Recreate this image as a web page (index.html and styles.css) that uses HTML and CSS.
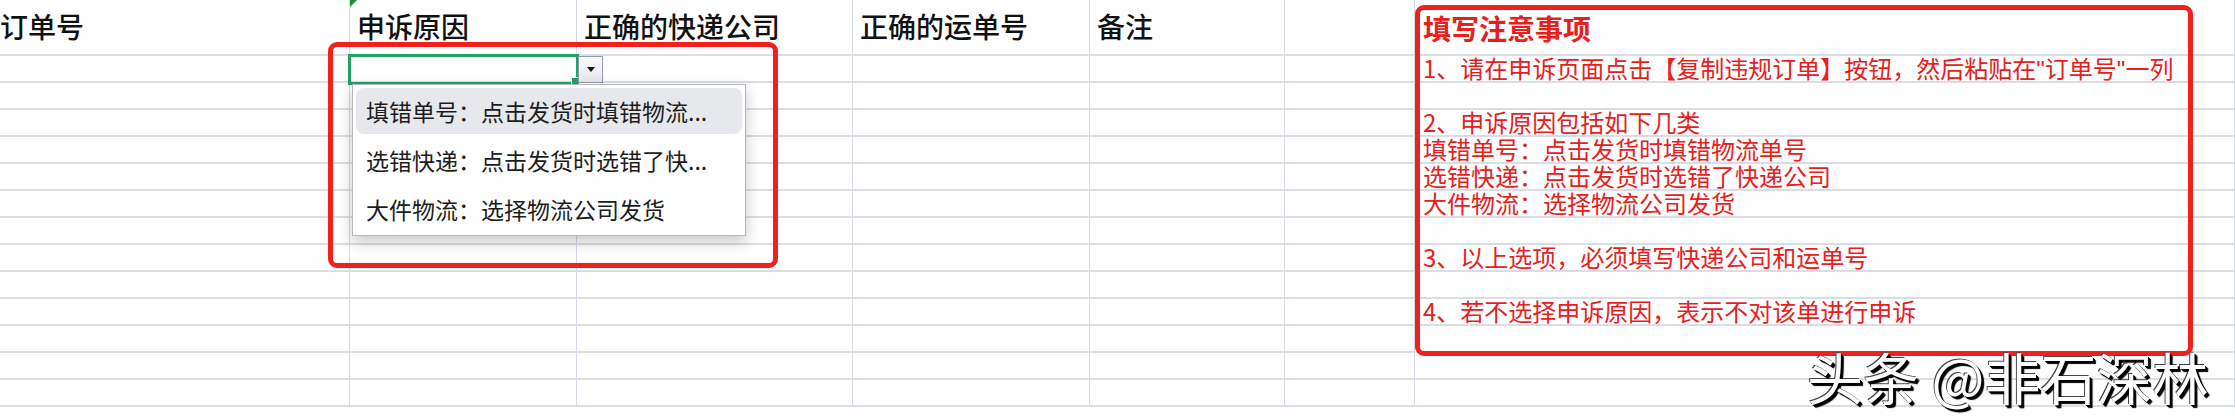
FILE: index.html
```html
<!DOCTYPE html>
<html lang="zh-CN">
<head>
    <meta charset="UTF-8">
    <meta name="viewport" content="width=device-width, initial-scale=1.0">
    <title>申诉模板</title>
    <link rel="stylesheet" href="styles.css">
</head>
<body>
    <div class="page">
        <div class="sheet">
            <div class="row head-row">
                <div class="cell">订单号</div>
                <div class="cell cell-flag">申诉原因</div>
                <div class="cell">正确的快递公司</div>
                <div class="cell">正确的运单号</div>
                <div class="cell">备注</div>
                <div class="cell"></div>
                <div class="cell"></div>
            </div>
            <div class="row">
                <div class="cell"></div>
                <div class="cell cell-active">
                    <span class="fill-handle"></span>
                    <span class="drop-btn"><span class="drop-arrow"></span></span>
                    <ul class="drop-menu">
                        <li class="drop-item hover">填错单号：点击发货时填错物流...</li>
                        <li class="drop-item">选错快递：点击发货时选错了快...</li>
                        <li class="drop-item">大件物流：选择物流公司发货</li>
                    </ul>
                </div>
                <div class="cell"></div><div class="cell"></div><div class="cell"></div><div class="cell"></div><div class="cell"></div>
            </div>
            <div class="row"><div class="cell"></div><div class="cell"></div><div class="cell"></div><div class="cell"></div><div class="cell"></div><div class="cell"></div><div class="cell"></div></div>
            <div class="row"><div class="cell"></div><div class="cell"></div><div class="cell"></div><div class="cell"></div><div class="cell"></div><div class="cell"></div><div class="cell"></div></div>
            <div class="row"><div class="cell"></div><div class="cell"></div><div class="cell"></div><div class="cell"></div><div class="cell"></div><div class="cell"></div><div class="cell"></div></div>
            <div class="row"><div class="cell"></div><div class="cell"></div><div class="cell"></div><div class="cell"></div><div class="cell"></div><div class="cell"></div><div class="cell"></div></div>
            <div class="row"><div class="cell"></div><div class="cell"></div><div class="cell"></div><div class="cell"></div><div class="cell"></div><div class="cell"></div><div class="cell"></div></div>
            <div class="row"><div class="cell"></div><div class="cell"></div><div class="cell"></div><div class="cell"></div><div class="cell"></div><div class="cell"></div><div class="cell"></div></div>
            <div class="row"><div class="cell"></div><div class="cell"></div><div class="cell"></div><div class="cell"></div><div class="cell"></div><div class="cell"></div><div class="cell"></div></div>
            <div class="row"><div class="cell"></div><div class="cell"></div><div class="cell"></div><div class="cell"></div><div class="cell"></div><div class="cell"></div><div class="cell"></div></div>
            <div class="row"><div class="cell"></div><div class="cell"></div><div class="cell"></div><div class="cell"></div><div class="cell"></div><div class="cell"></div><div class="cell"></div></div>
            <div class="row"><div class="cell"></div><div class="cell"></div><div class="cell"></div><div class="cell"></div><div class="cell"></div><div class="cell"></div><div class="cell"></div></div>
            <div class="row"><div class="cell"></div><div class="cell"></div><div class="cell"></div><div class="cell"></div><div class="cell"></div><div class="cell"></div><div class="cell"></div></div>
            <div class="row"><div class="cell"></div><div class="cell"></div><div class="cell"></div><div class="cell"></div><div class="cell"></div><div class="cell"></div><div class="cell"></div></div>
        </div>

        <!-- annotation marks drawn over the sheet -->
        <div class="mark mark-drop"></div>

        <div class="mark notes">
            <h2 class="notes-title">填写注意事项</h2>
            <p class="note-line">1、请在申诉页面点击【复制违规订单】按钮，然后粘贴在<span class="narrow">"</span>订单号<span class="narrow">"</span>一列</p>
            <p class="note-line"></p>
            <p class="note-line">2、申诉原因包括如下几类</p>
            <p class="note-line">填错单号：点击发货时填错物流单号</p>
            <p class="note-line">选错快递：点击发货时选错了快递公司</p>
            <p class="note-line">大件物流：选择物流公司发货</p>
            <p class="note-line"></p>
            <p class="note-line">3、以上选项，必须填写快递公司和运单号</p>
            <p class="note-line"></p>
            <p class="note-line">4、若不选择申诉原因，表示不对该单进行申诉</p>
        </div>

        <div class="watermark">头条 @非石深林</div>
    </div>
</body>
</html>
```

FILE: styles.css
```css
:root {
    --grid-h: #dadde4;
    --grid-v: #d3d9e6;
    --mark-red: #f2201b;
    --note-red: #e8201c;
    --active-green: #1fa463;
    --text-color: #111111;
}

* {
    margin: 0;
    padding: 0;
    box-sizing: border-box;
}

body {
    width: 2235px;
    height: 419px;
    overflow: hidden;
    background: #ffffff;
    color: var(--text-color);
    font-family: "Noto Sans CJK SC", "Noto Sans", sans-serif;
}

.page {
    position: relative;
    width: 2235px;
    height: 419px;
    overflow: hidden;
}

.sheet {
    margin-left: -7px;
}

.row {
    display: grid;
    grid-template-columns: 357px 227px 276px 237px 195px 130px 1fr;
    height: 27px;
}

.cell {
    position: relative;
    border-right: 1px solid var(--grid-v);
    border-bottom: 2px solid var(--grid-h);
    padding-left: 7px;
}

.head-row {
    height: 56px;
}

.head-row .cell {
    font-size: 28px;
    line-height: 36px;
    font-weight: 500;
    padding-top: 8px;
    white-space: nowrap;
}

.cell-flag::before {
    content: "";
    position: absolute;
    top: 0;
    left: 0;
    border-top: 7px solid #1f8a3a;
    border-right: 7px solid transparent;
}

/* active cell with its data-validation list */
.cell-active {
    outline: 3px solid var(--active-green);
    outline-offset: -1px;
    z-index: 1;
}

.fill-handle {
    position: absolute;
    left: 221px;
    top: 21px;
    width: 9px;
    height: 9px;
    background: var(--active-green);
    border: 1px solid #ffffff;
}

.drop-btn {
    position: absolute;
    left: 228px;
    top: 0;
    width: 25px;
    height: 27px;
    border: 1px solid #8f9bb0;
    background: linear-gradient(#fbfbfb, #e4e6ea);
    display: flex;
    align-items: center;
    justify-content: center;
}

.drop-arrow {
    border-top: 5px solid #111111;
    border-left: 4px solid transparent;
    border-right: 4px solid transparent;
}

.drop-menu {
    position: absolute;
    left: 2px;
    top: 28px;
    width: 394px;
    list-style: none;
    padding: 3px;
    background: #ffffff;
    border: 1px solid #b7b7b7;
    box-shadow: 0 6px 14px rgba(0, 0, 0, 0.22);
    z-index: 3;
}

.drop-item {
    height: 46px;
    line-height: 46px;
    padding: 0 10px;
    margin-bottom: 3px;
    border-radius: 8px;
    font-size: 23px;
    color: #1c1c1c;
    white-space: nowrap;
}

.drop-item:last-child {
    margin-bottom: 0;
}

.drop-item.hover {
    background: #e6e8ec;
}

/* red annotation boxes */
.mark {
    position: absolute;
    border: 5px solid var(--mark-red);
    border-radius: 9px;
}

.mark-drop {
    left: 328px;
    top: 42px;
    width: 450px;
    height: 226px;
    z-index: 4;
}

.notes {
    left: 1415px;
    top: 5px;
    width: 778px;
    height: 351px;
    padding-left: 3px;
    color: var(--note-red);
}

.notes-title {
    height: 45px;
    font-size: 28px;
    line-height: 36px;
    font-weight: 700;
}

.note-line {
    height: 27px;
    font-size: 24px;
    line-height: 26px;
    white-space: nowrap;
}

.narrow {
    font-family: "Liberation Sans", sans-serif;
}

.watermark {
    position: absolute;
    left: 1807px;
    top: 346px;
    font-size: 56px;
    line-height: 60px;
    color: #ffffff;
    white-space: nowrap;
    text-shadow: 1px 1px 0 #000000, 2px 2px 0 #000000, 3px 3px 1px #000000, -1px -1px 0 #444444;
    z-index: 5;
}
```
